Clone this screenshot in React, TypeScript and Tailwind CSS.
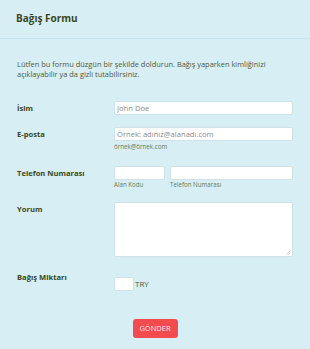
import React from "react";

export default function App() {
  const label = "w-[97px] shrink-0 text-[7.6px] font-bold text-[#3b4720] leading-[12px]";
  const input =
    "block h-[14px] w-full rounded-[2px] border border-[#cfe2e7] bg-white px-[2px] text-[7.6px] text-[#555] outline-none placeholder:text-[#8a8a8a]";
  const sub = "text-[6.2px] leading-[8px] text-[#6b7a50] mt-[1px]";
  return (
    <div
      className="min-h-[349px] w-[310px] bg-[#d6eef4]"
      style={{ fontFamily: '"Open Sans", sans-serif' }}
    >
      <div className="flex h-[39px] items-center border-b border-[#bfe2ee] px-[16px]">
        <h1 className="mt-[-2px] text-[10px] font-bold text-[#3b4720]">Bağış Formu</h1>
      </div>
      <div className="pl-[17px] pr-[17px]">
        <p className="mt-[20px] text-[7.45px] leading-[10px] text-[#4f5a3c]">
          Lütfen bu formu düzgün bir şekilde doldurun. Bağış yaparken kimliğinizi
          <br />
          açıklayabilir ya da gizli tutabilirsiniz.
        </p>

        <div className="mt-[22px] flex">
          <div className={label + " pt-[1px]"}>İsim</div>
          <div className="flex-1">
            <input className={input} placeholder="John Doe" />
          </div>
        </div>

        <div className="mt-[12px] flex">
          <div className={label + " pt-[1px]"}>E-posta</div>
          <div className="flex-1">
            <input className={input} placeholder="Örnek: adınız@alanadı.com" />
            <div className={sub + " mt-[2px]"}>örnek@örnek.com</div>
          </div>
        </div>

        <div className="mt-[15px] flex">
          <div className={label + " pt-[1px]"}>Telefon Numarası</div>
          <div className="flex flex-1 gap-[5px]">
            <div className="w-[51px]">
              <input className={input} />
              <div className={sub}>Alan Kodu</div>
            </div>
            <div className="flex-1">
              <input className={input} />
              <div className={sub}>Telefon Numarası</div>
            </div>
          </div>
        </div>

        <div className="mt-[13px] flex">
          <div className={label + " pt-[1px]"}>Yorum</div>
          <div className="relative flex-1">
            <textarea className="block h-[55px] w-full resize-none rounded-[2px] border border-[#cfe2e7] bg-white text-[8px] outline-none" />
            <svg
              className="absolute bottom-[2px] right-[2px]"
              width="5"
              height="5"
              viewBox="0 0 5 5"
            >
              <path d="M4.5 0.5 L0.5 4.5 M4.5 2.5 L2.5 4.5" stroke="#b5b5b5" strokeWidth="0.7" />
            </svg>
          </div>
        </div>

        <div className="mt-[14px] flex">
          <div className={label}>Bağış Miktarı</div>
          <div className="mt-[6px] flex flex-1 items-center">
            <input className="block h-[14px] w-[20px] rounded-[2px] border border-[#cfe2e7] bg-white outline-none" />
            <span className="ml-[1px] text-[8px] text-[#4f5a3c]">TRY</span>
          </div>
        </div>

        <div className="mt-[28px] flex justify-center">
          <button className="h-[19px] w-[45px] rounded-[3px] bg-[#f44b4f] text-[7.5px] text-[#ffe6e6]">
            GÖNDER
          </button>
        </div>
      </div>
    </div>
  );
}
